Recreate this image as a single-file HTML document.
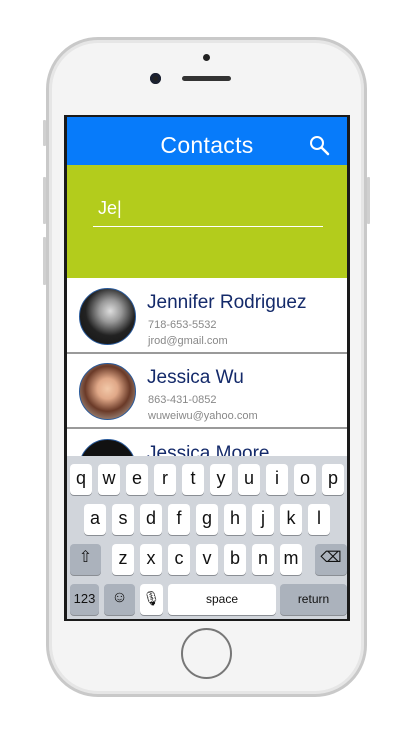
<!DOCTYPE html>
<html><head><meta charset="utf-8"><style>
*{margin:0;padding:0;box-sizing:border-box}
body{width:415px;height:736px;background:#fff;position:relative;overflow:hidden;font-family:"Liberation Sans",sans-serif}
.abs{position:absolute}
.phone{left:46px;top:37px;width:321px;height:660px;border-radius:52px;background:#f4f4f4;border:3px solid #c9c9c9;box-shadow:inset 0 0 0 3px #e6e6e6}
.btn{background:#d0d0d0;width:3px;border-radius:1px}
.screen{left:64px;top:115px;width:286px;height:506px;background:#1a1a1a;overflow:hidden}
.in{left:3px;top:2px;width:280px;height:502px;background:#fff;overflow:hidden}
.hdr{left:0;top:0;width:280px;height:48px;background:#077bfa;color:#fff;font-size:23px;text-align:center;line-height:56px;letter-spacing:.3px}
.grn{left:0;top:48px;width:280px;height:113px;background:#b3cc1c}
.row{left:0;width:280px;height:75px;border-bottom:2px solid #9a9a9a;background:#fff}
.av{left:12px;top:9px;width:57px;height:57px;border-radius:50%;border:1.5px solid #2a5a9a}
.nm{left:80px;top:13px;font-size:19px;color:#142a6a}
.ph{left:81px;top:40px;font-size:11px;color:#888}
.em{left:81px;top:56px;font-size:11px;color:#888}
.kb{left:0;top:339px;width:280px;height:163px;background:#d1d5db}
.k{position:absolute;width:22px;height:31px;background:#fff;border-radius:4px;box-shadow:0 1px 0 #8a8e94;font-size:18px;text-align:center;line-height:28px;color:#111}
.d{background:#abb2bc}
</style></head><body>
<div class="abs btn" style="left:43px;top:120px;height:26px"></div>
<div class="abs btn" style="left:43px;top:177px;height:47px"></div>
<div class="abs btn" style="left:43px;top:237px;height:48px"></div>
<div class="abs btn" style="left:367px;top:177px;height:47px"></div>
<div class="abs phone"></div>
<div class="abs" style="left:203px;top:54px;width:7px;height:7px;border-radius:50%;background:#222"></div>
<div class="abs" style="left:150px;top:73px;width:11px;height:11px;border-radius:50%;background:#222;box-shadow:inset 0 0 0 3px #1a2030"></div>
<div class="abs" style="left:182px;top:76px;width:49px;height:5px;border-radius:3px;background:#333"></div>
<div class="abs" style="left:181px;top:628px;width:51px;height:51px;border-radius:50%;border:2px solid #777;background:#f4f4f4"></div>
<div class="abs screen"><div class="abs in">
 <div class="abs hdr">Contacts</div>
 <svg class="abs" style="left:242px;top:18px" width="22" height="22" viewBox="0 0 22 22"><circle cx="8" cy="8" r="6" fill="none" stroke="#fff" stroke-width="2"/><path d="M12.5 12.5L19 19" stroke="#fff" stroke-width="2.5" stroke-linecap="round"/></svg>
 <div class="abs grn">
  <div class="abs" style="left:31px;top:33px;color:#fff;font-size:18px">Je|</div>
  <div class="abs" style="left:26px;top:61px;width:230px;height:1px;background:#fff"></div>
 </div>
 <div class="abs row" style="top:162px">
  <div class="abs av" style="background:radial-gradient(circle at 55% 40%,#ddd 0,#999 25%,#222 55%,#111 100%)"></div>
  <div class="abs nm">Jennifer Rodriguez</div><div class="abs ph">718-653-5532</div><div class="abs em">jrod@gmail.com</div>
 </div>
 <div class="abs row" style="top:237px">
  <div class="abs av" style="background:radial-gradient(circle at 50% 45%,#f2c8a8 0,#e0a888 25%,#6a3a28 55%,#c9c9c0 100%)"></div>
  <div class="abs nm">Jessica Wu</div><div class="abs ph">863-431-0852</div><div class="abs em">wuweiwu@yahoo.com</div>
 </div>
 <div class="abs row" style="top:313px;border:none">
  <div class="abs av" style="background:#111"></div>
  <div class="abs nm">Jessica Moore</div>
 </div>
 <div class="abs kb">
  <div class="k" style="left:3px;top:8px">q</div><div class="k" style="left:31px;top:8px">w</div><div class="k" style="left:59px;top:8px">e</div><div class="k" style="left:87px;top:8px">r</div><div class="k" style="left:115px;top:8px">t</div><div class="k" style="left:143px;top:8px">y</div><div class="k" style="left:171px;top:8px">u</div><div class="k" style="left:199px;top:8px">i</div><div class="k" style="left:227px;top:8px">o</div><div class="k" style="left:255px;top:8px">p</div>
  <div class="k" style="left:17px;top:48px">a</div><div class="k" style="left:45px;top:48px">s</div><div class="k" style="left:73px;top:48px">d</div><div class="k" style="left:101px;top:48px">f</div><div class="k" style="left:129px;top:48px">g</div><div class="k" style="left:157px;top:48px">h</div><div class="k" style="left:185px;top:48px">j</div><div class="k" style="left:213px;top:48px">k</div><div class="k" style="left:241px;top:48px">l</div>
  <div class="k d" style="left:3px;top:88px;width:31px;font-size:16px">⇧</div>
  <div class="k" style="left:45px;top:88px">z</div><div class="k" style="left:73px;top:88px">x</div><div class="k" style="left:101px;top:88px">c</div><div class="k" style="left:129px;top:88px">v</div><div class="k" style="left:157px;top:88px">b</div><div class="k" style="left:185px;top:88px">n</div><div class="k" style="left:213px;top:88px">m</div>
  <div class="k d" style="left:248px;top:88px;width:32px;font-size:15px">⌫</div>
  <div class="k d" style="left:3px;top:128px;width:29px;font-size:13px;line-height:30px">123</div>
  <div class="k d" style="left:37px;top:128px;width:31px;font-size:16px">☺</div>
  <div class="k" style="left:73px;top:128px;width:23px;font-size:14px">🎙</div>
  <div class="k" style="left:101px;top:128px;width:108px;font-size:12px;line-height:30px">space</div>
  <div class="k d" style="left:213px;top:128px;width:67px;font-size:12px;line-height:30px">return</div>
 </div>
</div></div>
</body></html>
